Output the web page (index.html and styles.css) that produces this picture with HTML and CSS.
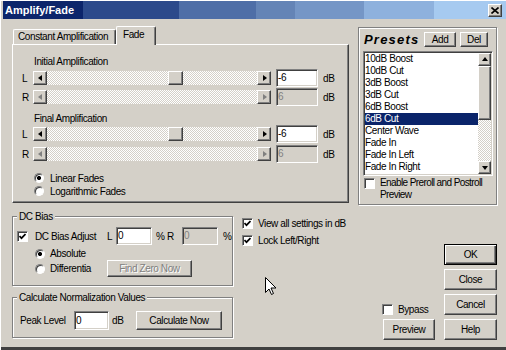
FILE: index.html
```html
<!DOCTYPE html>
<html>
<head>
<meta charset="utf-8">
<link rel="stylesheet" href="styles.css">
</head>
<body>
<div class="window">
  <div class="titlebar">
    <span class="title">Amplify/Fade</span>
    <span class="tb-close"><svg width="8" height="7" viewBox="0 0 8 7"><path d="M0.5 0.5 L7.5 6.5 M7.5 0.5 L0.5 6.5" stroke="#000" stroke-width="1.6" fill="none"/></svg></span>
  </div>

  <div class="top">
    <div class="tabs-wrap">
      <div class="tabs">
        <div class="tab tab-const">Constant Amplification</div>
        <div class="tab tab-active">Fade</div>
      </div>
      <div class="panel">
        <div class="sect-label">Initial Amplification</div>
        <div class="srow">
          <span class="ch">L</span>
          <div class="slider">
            <span class="sbtn"><i class="arr-l"></i></span>
            <span class="track"><span class="thumb" style="margin-left:121px"></span></span>
            <span class="sbtn"><i class="arr-r"></i></span>
          </div>
          <div class="field">-6</div>
          <span class="unit">dB</span>
        </div>
        <div class="srow">
          <span class="ch">R</span>
          <div class="slider dis">
            <span class="sbtn"><i class="arr-l"></i></span>
            <span class="track"></span>
            <span class="sbtn"><i class="arr-r"></i></span>
          </div>
          <div class="field dis">6</div>
          <span class="unit">dB</span>
        </div>

        <div class="sect-label final">Final Amplification</div>
        <div class="srow first">
          <span class="ch">L</span>
          <div class="slider">
            <span class="sbtn"><i class="arr-l"></i></span>
            <span class="track"><span class="thumb" style="margin-left:121px"></span></span>
            <span class="sbtn"><i class="arr-r"></i></span>
          </div>
          <div class="field">-6</div>
          <span class="unit">dB</span>
        </div>
        <div class="srow gap2">
          <span class="ch">R</span>
          <div class="slider dis">
            <span class="sbtn"><i class="arr-l"></i></span>
            <span class="track"></span>
            <span class="sbtn"><i class="arr-r"></i></span>
          </div>
          <div class="field dis">6</div>
          <span class="unit">dB</span>
        </div>

        <div class="rrow rfirst"><span class="radio on"></span>Linear Fades</div>
        <div class="rrow"><span class="radio"></span>Logarithmic Fades</div>
      </div>
    </div>

    <div class="presets">
      <div class="p-head">
        <span class="p-title">Presets</span>
        <div class="btn btn-add">Add</div>
        <div class="btn btn-del">Del</div>
      </div>
      <div class="list">
        <div class="items">
          <div class="item">10dB Boost</div>
          <div class="item">10dB Cut</div>
          <div class="item">3dB Boost</div>
          <div class="item">3dB Cut</div>
          <div class="item">6dB Boost</div>
          <div class="item sel">6dB Cut</div>
          <div class="item">Center Wave</div>
          <div class="item">Fade In</div>
          <div class="item">Fade In Left</div>
          <div class="item">Fade In Right</div>
          <div class="item">Fade Out</div>
        </div>
        <div class="vscroll">
          <span class="sbtn sq"><i class="arr-u"></i></span>
          <span class="vthumb"></span>
          <span class="vtrack"></span>
          <span class="sbtn sq"><i class="arr-d"></i></span>
        </div>
      </div>
      <div class="chk-row enable"><span class="cb"></span><span class="enable-text">Enable Preroll and Postroll<br>Preview</span></div>
    </div>
  </div>

  <div class="bottom">
    <div class="groups">
      <div class="group dc">
        <div class="legend">DC Bias</div>
        <div class="dc-row1">
          <span class="cb on"><svg width="7" height="7" viewBox="0 0 7 7"><path d="M0.5 3 L2.5 5.2 L6.5 1" stroke="#000" stroke-width="1.7" fill="none"/></svg></span>
          <span class="w-adj">DC Bias Adjust</span>
          <span class="w-L">L</span>
          <div class="field f36">0</div>
          <span class="pct">%</span>
          <span class="w-R">R</span>
          <div class="field f36 dis">0</div>
          <span class="pct2">%</span>
        </div>
        <div class="dc-row2"><span class="radio on"></span>Absolute</div>
        <div class="dc-row3">
          <span class="rlab"><span class="radio"></span>Differentia</span>
          <div class="btn dis btn-fz">Find Zero Now</div>
        </div>
      </div>
      <div class="group calc">
        <div class="legend">Calculate Normalization Values</div>
        <div class="calc-row">
          <span class="w-peak">Peak Level</span>
          <div class="field f35">0</div>
          <span class="w-db">dB</span>
          <div class="btn btn-calc">Calculate Now</div>
        </div>
      </div>
    </div>

    <div class="opts">
      <div class="opt"><span class="cb on"><svg width="7" height="7" viewBox="0 0 7 7"><path d="M0.5 3 L2.5 5.2 L6.5 1" stroke="#000" stroke-width="1.7" fill="none"/></svg></span>View all settings in dB</div>
      <div class="opt second"><span class="cb on"><svg width="7" height="7" viewBox="0 0 7 7"><path d="M0.5 3 L2.5 5.2 L6.5 1" stroke="#000" stroke-width="1.7" fill="none"/></svg></span>Lock Left/Right</div>
    </div>

    <div class="pcol">
      <div class="opt"><span class="cb"></span>Bypass</div>
      <div class="btn btn-prev">Preview</div>
    </div>

    <div class="bcol">
      <div class="btn default">OK</div>
      <div class="btn">Close</div>
      <div class="btn">Cancel</div>
      <div class="btn">Help</div>
    </div>
  </div>

  <svg class="cursor" width="12" height="19" viewBox="0 0 12 19"><path d="M0.5 0.5 L0.5 15.5 L4 12 L6.5 17.5 L8.5 16.5 L6 11 L11 11 Z" fill="#fff" stroke="#000" stroke-width="1"/></svg>
</div>
</body>
</html>
```

FILE: styles.css
```css
* { box-sizing: border-box; }

body {
  margin: 0;
  background: #d4d0c8;
  font-family: "Liberation Sans", Arial, sans-serif;
  font-size: 10px;
  letter-spacing: -0.4px;
  color: #000;
}

.window {
  position: relative;
  width: 506px;
  height: 350px;
  padding: 1px 0 0 3px;
  background: #d4d0c8;
  overflow: hidden;
  box-shadow: inset 1px 1px #fff, inset 0 -3px #404040;
}

/* title bar */
.titlebar {
  display: flex;
  align-items: center;
  justify-content: space-between;
  height: 18px;
  padding: 0 4px 0 2px;
  background: linear-gradient(to right,
    #0c256b 0 80px, #2c4a8b 80px 176px, #4e6ea7 176px 253px,
    #6484b6 253px 292px, #7596c6 292px 361px, #8eb1dd 361px 431px, #a6caf0 431px);
}
.title {
  color: #fff;
  font-weight: bold;
  font-size: 11px;
  letter-spacing: 0;
}
.tb-close {
  width: 14px;
  height: 13px;
  display: flex;
  align-items: center;
  justify-content: center;
  background: #d4d0c8;
  border: 1px solid;
  border-color: #fff #404040 #404040 #fff;
  box-shadow: inset -1px -1px #808080;
}

/* top area */
.top {
  display: flex;
  align-items: flex-start;
  margin-top: 7px;
}
.tabs-wrap {
  margin-left: 9px;
  width: 337px;
}
.tabs {
  display: flex;
  align-items: flex-end;
  height: 18px;
  padding-left: 1px;
}
.tab {
  background: #d4d0c8;
  border: 1px solid;
  border-bottom: 0;
  border-color: #fff #404040 #404040 #fff;
  box-shadow: inset -1px 0 #808080;
  border-radius: 2px 2px 0 0;
  line-height: 12px;
  white-space: nowrap;
}
.tab-const {
  width: 103px;
  height: 15px;
  padding: 1px 0 0 4px;
}
.tab-active {
  position: relative;
  z-index: 1;
  width: 40px;
  height: 19px;
  margin-bottom: -1px;
  padding: 2px 0 0 6px;
}
.panel {
  height: 159px;
  border: 1px solid;
  border-color: #fff #404040 #404040 #fff;
  box-shadow: inset -1px -1px #808080;
}
.sect-label {
  margin: 11px 0 0 21px;
  line-height: 12px;
}
.sect-label.final { margin-top: 7px; }
.srow {
  display: flex;
  align-items: center;
  height: 18px;
  padding-left: 9px;
  margin-top: 1px;
}
.srow.first { margin-top: 0; }
.srow.gap2 { margin-top: 2px; }
.ch { width: 11px; }

.slider {
  display: flex;
  width: 238px;
  height: 14px;
}
.sbtn, .thumb, .vthumb, .btn {
  background: #d4d0c8;
  border: 1px solid;
  border-color: #fff #404040 #404040 #fff;
  box-shadow: inset -1px -1px #808080;
}
.sbtn {
  width: 14px;
  height: 14px;
  flex: none;
  display: flex;
  align-items: center;
  justify-content: center;
}
.track, .vtrack {
  background: repeating-conic-gradient(#fff 0 25%, #d4d0c8 0 50%) 0 0 / 2px 2px;
}
.track {
  flex: 1;
  display: flex;
}
.thumb {
  width: 15px;
  height: 14px;
  flex: none;
}
.arr-l, .arr-r, .arr-u, .arr-d {
  display: block;
  width: 0;
  height: 0;
  border-style: solid;
}
.arr-l { border-width: 3.5px 4px 3.5px 0; border-color: transparent #000 transparent transparent; margin-left: -1px; }
.arr-r { border-width: 3.5px 0 3.5px 4px; border-color: transparent transparent transparent #000; margin-left: 1px; }
.arr-u { border-width: 0 3.5px 4px 3.5px; border-color: transparent transparent #000 transparent; margin-top: -1px; }
.arr-d { border-width: 4px 3.5px 0 3.5px; border-color: #000 transparent transparent transparent; margin-top: 1px; }
.slider.dis .arr-l { border-right-color: #808080; }
.slider.dis .arr-r { border-left-color: #808080; }

.field {
  margin-left: 5px;
  width: 42px;
  height: 18px;
  flex: none;
  padding-left: 1px;
  line-height: 16px;
  background: #fff;
  border: 1px solid;
  border-color: #808080 #fff #fff #808080;
  box-shadow: inset 1px 1px #404040, inset -1px -1px #d4d0c8;
}
.field.dis {
  background: #d4d0c8;
  color: #808080;
}
.unit { margin-left: 5px; }

.rrow {
  display: flex;
  align-items: flex-start;
  line-height: 13px;
  padding-left: 21px;
}
.rrow.rfirst { margin-top: 9px; }
.radio {
  width: 10px;
  height: 10px;
  flex: none;
  margin: 1px 6px 0 0;
  border-radius: 50%;
  background: #fff;
  border: 1px solid;
  border-color: #808080 #fff #fff #808080;
  box-shadow: inset 1px 1px #404040;
}
.radio.on {
  background: radial-gradient(circle, #000 0 1.8px, #fff 2.3px);
}

/* presets */
.presets {
  margin: 1px 0 0 9px;
  width: 139px;
  height: 178px;
  padding-top: 4px;
  border: 1px solid #808080;
  box-shadow: inset 1px 1px #fff, 1px 1px #fff;
}
.p-head {
  display: flex;
  align-items: center;
  height: 15px;
  padding: 0 8px 0 5px;
}
.p-title {
  flex: 1;
  font-size: 13px;
  font-weight: bold;
  font-style: italic;
  letter-spacing: 1.2px;
  line-height: 15px;
}
.btn {
  display: flex;
  align-items: center;
  justify-content: center;
  white-space: nowrap;
}
.btn-add { width: 32px; height: 15px; margin-right: 4px; }
.btn-del { width: 28px; height: 15px; }
.list {
  display: flex;
  margin: 4px 0 0 4px;
  width: 130px;
  height: 125px;
  background: #fff;
  border: 1px solid;
  border-color: #808080 #fff #fff #808080;
  box-shadow: inset 1px 1px #404040, inset -1px -1px #d4d0c8;
  padding: 1px;
}
.items {
  flex: 1;
  overflow: hidden;
}
.item {
  height: 12px;
  line-height: 12px;
  white-space: nowrap;
}
.item.sel {
  background: #0a246a;
  color: #fff;
}
.vscroll {
  width: 13px;
  display: flex;
  flex-direction: column;
}
.sq { width: 13px; height: 13px; }
.vthumb { height: 54px; flex: none; }
.vtrack { flex: 1; }

.chk-row {
  display: flex;
  align-items: flex-start;
  line-height: 12px;
}
.enable {
  margin-top: 1px;
  padding-left: 5px;
}
.enable-text {
  letter-spacing: -0.6px;
  white-space: nowrap;
}
.cb {
  width: 11px;
  height: 11px;
  flex: none;
  margin: 1px 5px 0 0;
  display: flex;
  align-items: center;
  justify-content: center;
  background: #fff;
  border: 1px solid;
  border-color: #808080 #fff #fff #808080;
  box-shadow: inset 1px 1px #404040;
}

/* bottom */
.bottom {
  display: flex;
  align-items: flex-start;
}
.groups {
  margin-left: 9px;
  width: 221px;
}
.group {
  border: 1px solid #808080;
  box-shadow: inset 1px 1px #fff, 1px 1px #fff;
}
.legend {
  display: table;
  margin: -6px 0 0 4px;
  padding: 0 2px;
  background: #d4d0c8;
  line-height: 12px;
}
.dc {
  margin-top: 11px;
  height: 70px;
}
.dc-row1 {
  display: flex;
  align-items: center;
  height: 18px;
  margin-top: 4px;
  padding-left: 4px;
}
.dc-row1 .cb { margin: 0 7px 0 0; }
.w-adj { width: 72px; }
.w-L { width: 9px; }
.f36 { margin-left: 0; width: 36px; }
.pct { margin-left: 4px; width: 11px; }
.w-R { width: 15px; }
.pct2 { margin-left: 5px; }
.dc-row2 {
  display: flex;
  align-items: flex-start;
  height: 12px;
  line-height: 12px;
  margin-top: 3px;
  padding-left: 22px;
}
.dc-row2 .radio, .rlab .radio { margin-right: 5px; }
.dc-row3 {
  display: flex;
  align-items: center;
  height: 17px;
  padding-left: 22px;
}
.rlab {
  display: flex;
  align-items: center;
  width: 72px;
}
.rlab .radio { margin-top: 0; }
.btn-fz { width: 85px; height: 17px; }
.btn.dis {
  color: #808080;
  text-shadow: 1px 1px #fff;
}
.calc {
  margin-top: 11px;
  height: 41px;
}
.calc-row {
  display: flex;
  align-items: center;
  height: 19px;
  margin-top: 7px;
  padding-left: 7px;
}
.w-peak { width: 54px; }
.f35 { margin-left: 0; width: 35px; height: 19px; line-height: 17px; }
.w-db { margin-left: 3px; width: 24px; }
.btn-calc { width: 86px; height: 19px; }

.opts {
  margin: 12px 0 0 9px;
  width: 140px;
}
.opt {
  display: flex;
  align-items: flex-start;
  line-height: 13px;
  white-space: nowrap;
}
.opt.second { margin-top: 4px; }

.pcol {
  margin-top: 98px;
  width: 53px;
}
.btn-prev {
  margin: 3px 0 0 1px;
  width: 52px;
  height: 21px;
}

.bcol {
  margin: 39px 0 0 9px;
  width: 53px;
  display: flex;
  flex-direction: column;
  gap: 4px;
}
.bcol .btn { height: 21px; }
.btn.default {
  border: 1px solid #000;
  box-shadow: inset 1px 1px #fff, inset -1px -1px #404040, inset -2px -2px #808080;
}

.cursor {
  position: absolute;
  left: 265px;
  top: 277px;
}
```
